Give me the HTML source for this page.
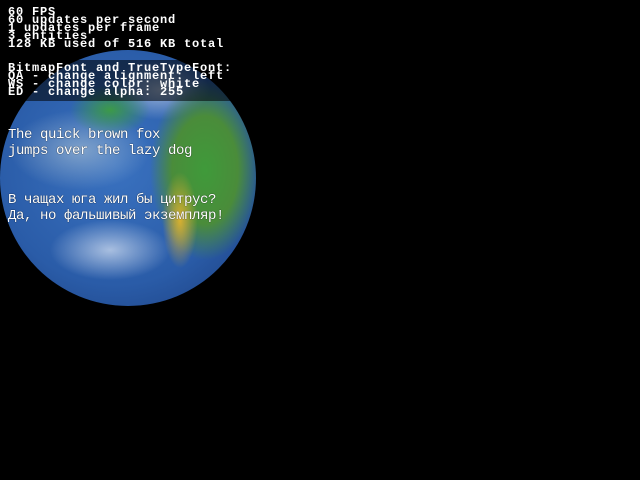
<!DOCTYPE html>
<html><head><meta charset="utf-8"><style>
html,body{margin:0;padding:0;background:#000;width:640px;height:480px;overflow:hidden;position:relative}
.globe{position:absolute;left:0;top:50px;width:256px;height:256px;border-radius:50%;
background:
radial-gradient(ellipse 22px 60px at 180px 170px,#d8b030 0%,rgba(216,176,48,0) 80%),
radial-gradient(ellipse 55px 90px at 205px 120px,#3f9a3a 0%,#4a8c3a 60%,rgba(60,140,60,0) 100%),
radial-gradient(ellipse 40px 25px at 110px 60px,#3c9a48 0%,rgba(60,150,70,0) 100%),
radial-gradient(ellipse 60px 30px at 110px 200px,rgba(220,230,245,.7) 0%,rgba(200,215,240,0) 100%),
radial-gradient(ellipse 70px 40px at 80px 100px,rgba(200,215,220,.5) 0%,rgba(200,215,240,0) 100%),
radial-gradient(ellipse 50px 30px at 160px 40px,rgba(230,235,245,.6) 0%,rgba(200,215,240,0) 100%),
radial-gradient(circle at 45% 45%,#3a72c0 0%,#2a5ca8 60%,#1c3f80 95%,#15306a 100%);}
.shade{position:absolute;left:0;top:60px;width:640px;height:41px;background:rgba(0,0,0,.55)}
.t{position:absolute;left:8px;color:#fff;font-family:"Liberation Mono",monospace;font-weight:bold;white-space:pre;}
.s{font-size:12px;line-height:8px;letter-spacing:0.8px}
.b{font-size:14px;line-height:16px;letter-spacing:-0.4px;font-weight:normal;text-shadow:0 0 1px #000}
</style></head><body>
<div class="globe"></div>
<div class="shade"></div>
<div class="t s" style="top:8px">60 FPS
60 updates per second
1 updates per frame
3 entities
128 KB used of 516 KB total</div>
<div class="t s" style="top:64px">BitmapFont and TrueTypeFont:
QA - change alignment: left
WS - change color: white
ED - change alpha: 255</div>
<div class="t b" style="top:127px">The quick brown fox
jumps over the lazy dog</div>
<div class="t b" style="top:192px">В чащах юга жил бы цитрус?
Да, но фальшивый экземпляр!</div>
</body></html>
